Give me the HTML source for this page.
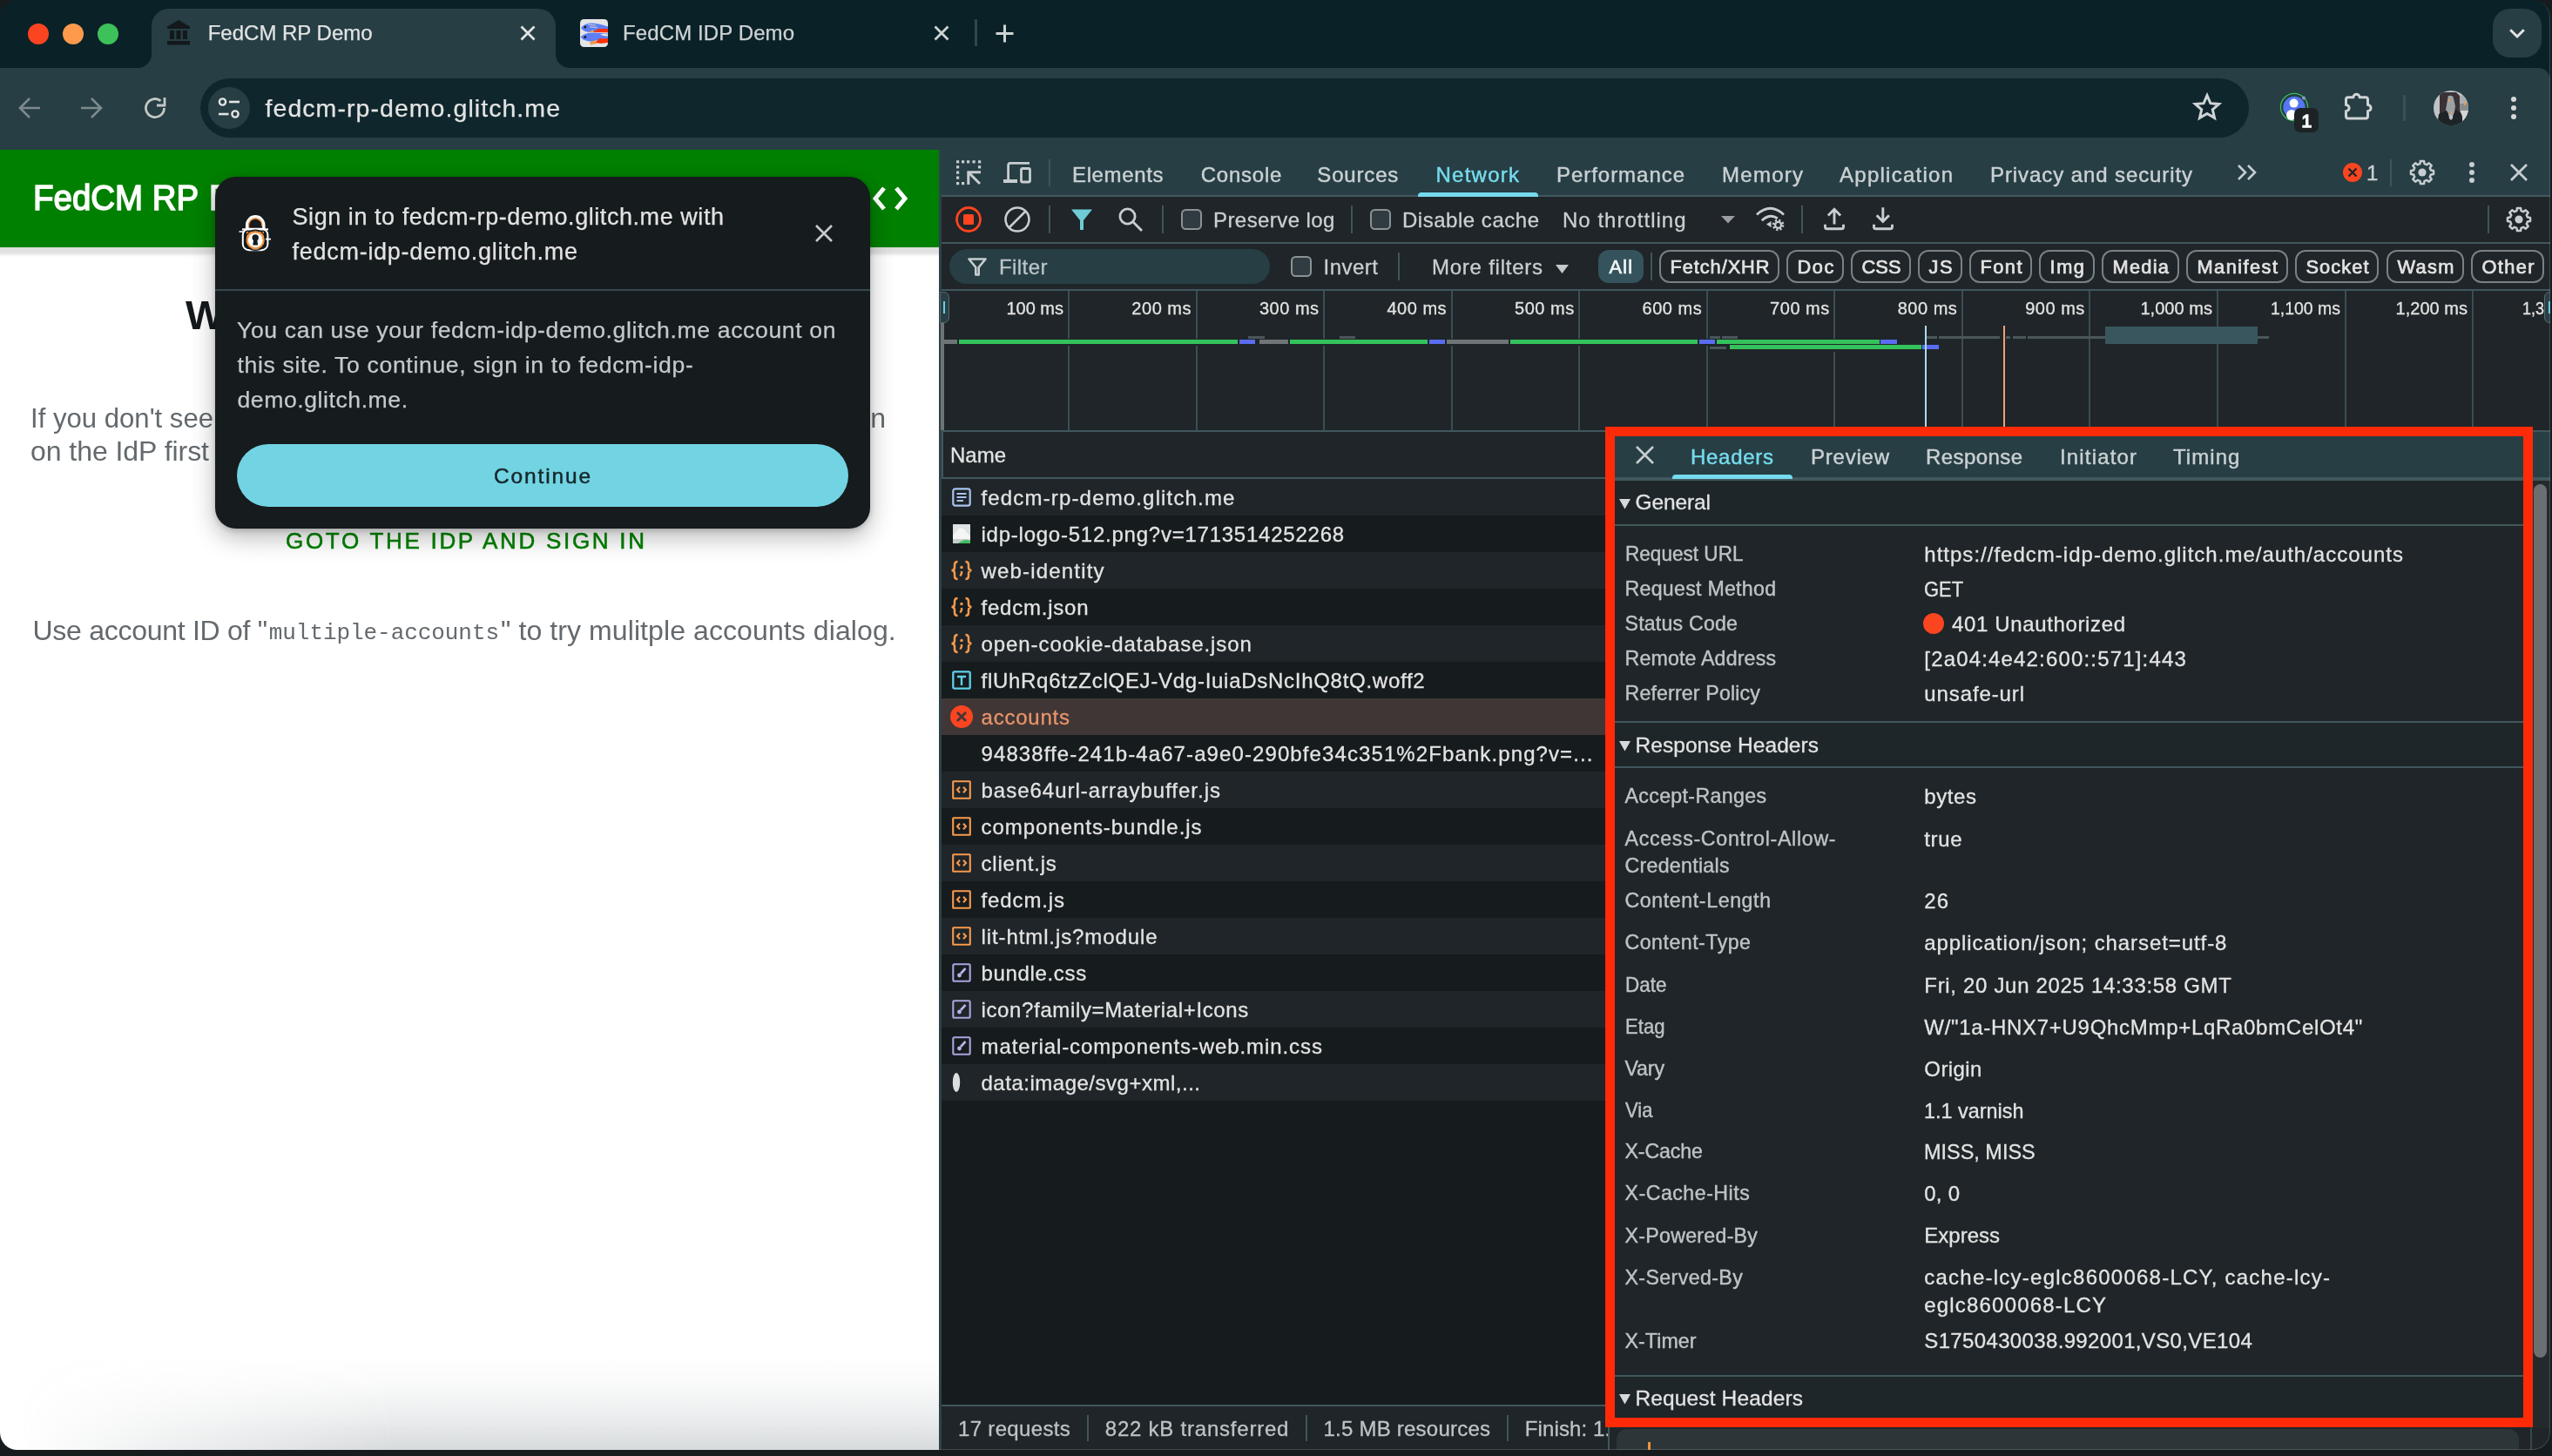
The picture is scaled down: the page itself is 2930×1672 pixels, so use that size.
<!DOCTYPE html>
<html lang="en"><head><meta charset="utf-8"><title>FedCM RP Demo</title>
<style>
html,body{margin:0;padding:0;background:#161b1e;}
body{width:2930px;height:1672px;overflow:hidden;position:relative;font-family:"Liberation Sans",sans-serif;}
#win{position:absolute;left:0;top:0;width:2928px;height:1665px;overflow:hidden;border-radius:20px;background:#0a2227;will-change:transform;}
#win div,#win svg,#win span,.g{position:absolute;}
.g{left:0;top:0;width:0;height:0;display:block;margin:0;padding:0;}
#win svg{overflow:visible;}
.t{white-space:pre;line-height:normal;}
#edge{left:1078px;top:0;width:1850px;height:1665px;border-radius:0 20px 20px 0;box-sizing:border-box;border:1.5px solid rgba(150,170,176,0.28);border-left:none;border-top:none;pointer-events:none;}
</style></head><body><div id="win">
<header id="browser-chrome" class="g">
<div style="left:0px;top:78px;width:2928px;height:94px;background:#263e44;border-radius:0 14px 0 0;"></div>
<div style="left:174px;top:10px;width:464px;height:70px;background:#263e44;border-radius:20px 20px 0 0;"></div>
<div style="left:158px;top:62px;width:16px;height:16px;background:radial-gradient(circle at 0 0, rgba(0,0,0,0) 15.5px, #263e44 16.5px);"></div>
<div style="left:638px;top:62px;width:16px;height:16px;background:radial-gradient(circle at 100% 0, rgba(0,0,0,0) 15.5px, #263e44 16.5px);"></div>
<div style="left:32px;top:27px;width:24px;height:24px;background:#fb4520;border-radius:50%;"></div>
<div style="left:72px;top:27px;width:24px;height:24px;background:#ff9a4d;border-radius:50%;"></div>
<div style="left:112px;top:27px;width:24px;height:24px;background:#3dc25a;border-radius:50%;"></div>
<svg style="left:191px;top:22px;" width="28" height="30" viewBox="0 0 28 30"><path d="M14 1 L27 8.5 V11 H1 V8.5 Z M4 13 h5 v10 h-5z M11.5 13 h5 v10 h-5z M19 13 h5 v10 h-5z M1 25 h26 v4.5 h-26z" fill="#12181b"/></svg>
<span class="t" style="left:238.7px;top:24px;font:400 24px 'Liberation Sans', sans-serif;color:#e3e3e3;-webkit-text-stroke:0.25px #e3e3e3;">FedCM RP Demo</span>
<svg style="left:596px;top:28px;" width="20" height="20" viewBox="0 0 20 20"><path d="M2.5 2.5 L17.5 17.5 M17.5 2.5 L2.5 17.5" stroke="#e3e3e3" stroke-width="2.8" fill="none"/></svg>
<svg style="left:666px;top:22px;" width="32" height="32" viewBox="0 0 32 32"><rect width="32" height="32" rx="4.5" fill="#e4e5e6"/><path d="M1 10 Q6 4 14 4.5 Q22 5 32 8.5 V15 H12 Q4 15 1 10z" fill="#5e7ef5"/><path d="M0.5 20.5 Q6 15 16 15.5 L32 16.5 V23 L20 24 Q14 27 8 25 Q3 24 0.5 20.5z" fill="#5e7ef5"/><path d="M15 15 L21 11 H32 V15.2z" fill="#fb3208"/><path d="M17 27 L22 22.3 H32 V27 L24 28z" fill="#fb3208"/><path d="M11 27 L17 24 L19 28 L12 29.5z" fill="#f59a45"/><path d="M10 15 L15 12 L16 15z" fill="#f59a45"/><path d="M23 17.5 Q28 16 32 17.6 V19.5 Q27 20 23 17.5z" fill="#e4e5e6"/><circle cx="5.8" cy="9" r="1.5" fill="#1c1c1c"/><circle cx="5.8" cy="20.6" r="1.5" fill="#1c1c1c"/><path d="M9 6 L18 7 M11 9 L20 9.5" stroke="#aeb9d8" stroke-width="1.4"/></svg>
<span class="t" style="left:715px;top:24px;font:400 24px 'Liberation Sans', sans-serif;color:#cfd3d4;letter-spacing:0.11px;-webkit-text-stroke:0.25px #cfd3d4;">FedCM IDP Demo</span>
<svg style="left:1071px;top:28px;" width="20" height="20" viewBox="0 0 20 20"><path d="M2.5 2.5 L17.5 17.5 M17.5 2.5 L2.5 17.5" stroke="#cfd3d4" stroke-width="2.8" fill="none"/></svg>
<div style="left:1119px;top:22px;width:2.5px;height:31px;background:#2f474d;border-radius:1px;"></div>
<svg style="left:1143px;top:28px;" width="21" height="21" viewBox="0 0 21 21"><path d="M10.5 0.5 V20.5 M0.5 10.5 H20.5" stroke="#cfd3d4" stroke-width="3" fill="none"/></svg>
<div style="left:2862px;top:10px;width:56px;height:56px;background:#263e44;border-radius:20px;"></div>
<svg style="left:2880px;top:30px;" width="20" height="14" viewBox="0 0 20 14"><path d="M2.2 4.2 L10 12 L17.8 4.2" stroke="#e3e3e3" stroke-width="3" fill="none"/></svg>
<svg style="left:20px;top:110px;" width="28" height="28" viewBox="0 0 28 28"><path d="M26 14 H4 M14 3 L3 14 L14 25" stroke="#7d8a8d" stroke-width="2.6" fill="none"/></svg>
<svg style="left:91px;top:110px;" width="28" height="28" viewBox="0 0 28 28"><path d="M2 14 H24 M14 3 L25 14 L14 25" stroke="#7d8a8d" stroke-width="2.6" fill="none"/></svg>
<svg style="left:164px;top:110px;" width="28" height="28" viewBox="0 0 28 28"><path d="M24.5 14 A10.5 10.5 0 1 1 20.5 5.8" stroke="#c4c7c5" stroke-width="2.8" fill="none"/><path d="M25 2 V11 H16" stroke="#c4c7c5" stroke-width="2.8" fill="none"/></svg>
<div style="left:230px;top:90px;width:2352px;height:68px;background:#0f262c;border-radius:34px;"></div>
<div style="left:239px;top:100px;width:48px;height:48px;background:#263e44;border-radius:50%;"></div>
<svg style="left:250px;top:111px;" width="26" height="26" viewBox="0 0 26 26"><circle cx="5.5" cy="6" r="3.6" stroke="#e3e3e3" stroke-width="2.4" fill="none"/><path d="M13 6 H25" stroke="#e3e3e3" stroke-width="2.6"/><circle cx="20" cy="20" r="3.6" stroke="#e3e3e3" stroke-width="2.4" fill="none"/><path d="M1 20 H12.5" stroke="#e3e3e3" stroke-width="2.6"/></svg>
<span class="t" style="left:304.5px;top:108px;font:400 28.5px 'Liberation Sans', sans-serif;color:#e3e3e3;letter-spacing:1.06px;-webkit-text-stroke:0.25px #e3e3e3;">fedcm-rp-demo.glitch.me</span>
<svg style="left:2518px;top:107px;" width="32" height="31" viewBox="0 0 32 31"><path d="M16 2.6 L19.9 11.7 L29.6 12.5 L22.3 18.9 L24.5 28.4 L16 23.4 L7.5 28.4 L9.7 18.9 L2.4 12.5 L12.1 11.7 Z" stroke="#cfd4d5" stroke-width="3" fill="none" stroke-linejoin="miter"/></svg>
<svg style="left:2617px;top:106px;" width="34" height="34" viewBox="0 0 34 34"><circle cx="17" cy="17" r="15.6" fill="#263e44" stroke="#3dc25a" stroke-width="1.2"/><circle cx="17" cy="17.3" r="12.6" fill="#5577f3"/><circle cx="16.6" cy="12.6" r="5" fill="#fff"/><circle cx="14" cy="26" r="6" fill="#fff"/><circle cx="28" cy="6.4" r="2" fill="#8d96c8"/></svg>
<div style="left:2634px;top:124px;width:28px;height:28px;background:#1d2225;border-radius:7px;"></div>
<span class="t" style="left:2642.5px;top:127px;font:400 21px 'Liberation Sans', sans-serif;color:#fff;-webkit-text-stroke:1.5px #fff;">1</span>
<svg style="left:2690px;top:104px;" width="36" height="36" viewBox="0 0 36 36"><path d="M6 7.8 H11.9 A3.6 3.6 0 0 1 19.1 7.8 H26 Q28.5 7.8 28.5 10.3 V16.4 A3.6 3.6 0 0 1 28.5 23.6 V29.5 Q28.5 32 26 32 H6 Q3.5 32 3.5 29.5 V23.6 A3.6 3.6 0 0 0 3.5 16.4 V10.3 Q3.5 7.8 6 7.8 Z" stroke="#cfd4d5" stroke-width="3" fill="none" stroke-linejoin="round"/></svg>
<div style="left:2759px;top:109px;width:2.5px;height:30px;background:#3a5158;border-radius:1px;"></div>
<svg style="left:2794px;top:104px;" width="40" height="40" viewBox="0 0 40 40"><defs><clipPath id="avc"><circle cx="20" cy="20" r="20"/></clipPath></defs><g clip-path="url(#avc)"><rect width="40" height="40" fill="#bfc3c6"/><rect x="22" y="6" width="18" height="9" fill="#a9adb0"/><rect x="24" y="15" width="16" height="8" fill="#878c8f"/><rect x="26" y="23" width="14" height="12" fill="#d2d5d6"/><path d="M7 40 V4 L10 2 H26 L30 6 V22 L33 30 V40z" fill="#3a3235"/><path d="M13 8 Q20 3 25 9 L26 20 Q24 28 20 31 Q15 28 13 20z" fill="#9ba2a5"/><path d="M12 6 L17 5 L14 22 L16 30 L12 28z M22 5 L27 8 L27 24 L23 30 L25 18z" fill="#3a3235"/><path d="M4 40 L6 27 L15 23 L20 32 L26 22 L32 27 L34 40z" fill="#1d2326"/><path d="M17 26 Q20 30 22.5 26 L22 32 L20 34 L18 32z" fill="#b9c0c2"/><rect x="17" y="10" width="1.6" height="3" fill="#f59a45"/><rect x="19.5" y="24" width="1.6" height="3" fill="#f59a45"/><rect x="35" y="13" width="1.6" height="4" fill="#f59a45"/></g></svg>
<div style="left:2883px;top:111px;width:6px;height:6px;background:#d5d8d9;border-radius:50%;"></div>
<div style="left:2883px;top:121px;width:6px;height:6px;background:#d5d8d9;border-radius:50%;"></div>
<div style="left:2883px;top:131px;width:6px;height:6px;background:#d5d8d9;border-radius:50%;"></div>
</header>
<main id="page" class="g">
<div style="left:0px;top:172px;width:1078px;height:1493px;background:#ffffff;"></div>
<div style="left:0px;top:1555px;width:1078px;height:110px;background:linear-gradient(to bottom, rgba(110,122,128,0) 0%, rgba(110,122,128,0.035) 30%, rgba(110,122,128,0.12) 62%, rgba(110,122,128,0.27) 100%);-webkit-mask-image:linear-gradient(to right, rgba(0,0,0,0) 2%, rgba(0,0,0,0.45) 18%, #000 42%);mask-image:linear-gradient(to right, rgba(0,0,0,0) 2%, rgba(0,0,0,0.45) 18%, #000 42%);"></div>
<div style="left:0px;top:284px;width:1078px;height:12px;background:linear-gradient(to bottom, rgba(0,0,0,0.13), rgba(0,0,0,0.11) 55%, rgba(0,0,0,0.02) 80%, rgba(0,0,0,0));"></div>
<div style="left:0px;top:172px;width:1078px;height:112px;background:#008000;"></div>
<span class="t" style="left:38.4px;top:205px;font:400 40px 'Liberation Sans', sans-serif;color:#fff;-webkit-text-stroke:1.5px #fff;transform:scaleX(0.9615);transform-origin:0 0;">FedCM RP</span>
<span class="t" style="left:240px;top:205px;font:400 40px 'Liberation Sans', sans-serif;color:#fff;-webkit-text-stroke:1.5px #fff;transform:scaleX(0.9559);transform-origin:0 0;">Demo</span>
<svg style="left:1000px;top:212px;" width="44" height="32" viewBox="0 0 44 32"><path d="M15 4 L5 16 L15 28 M29 4 L39 16 L29 28" stroke="#fff" stroke-width="5" fill="none"/></svg>
<span class="t" style="left:213px;top:334px;font:700 47px 'Liberation Sans', sans-serif;color:#14191c;letter-spacing:0.84px;">Welcome!</span>
<span class="t" style="left:35px;top:461.5px;font:400 32px 'Liberation Sans', sans-serif;color:#63696d;transform:scaleX(0.9721);transform-origin:0 0;">If you don't see</span>
<span class="t" style="left:254px;top:461.5px;font:400 32px 'Liberation Sans', sans-serif;color:#63696d;letter-spacing:3.26px;">the FedCM dialog, you might need to sign in</span>
<span class="t" style="left:35px;top:499.75px;font:400 32px 'Liberation Sans', sans-serif;color:#63696d;letter-spacing:-0.05px;">on the IdP first</span>
<span class="t" style="left:328px;top:605.5px;font:400 26px 'Liberation Sans', sans-serif;color:#008000;letter-spacing:2.71px;-webkit-text-stroke:0.55px #008000;">GOTO THE IDP AND SIGN IN</span>
<span class="t" style="left:37.5px;top:706px;font:400 32px 'Liberation Sans', sans-serif;color:#63696d;letter-spacing:-0.28px;">Use account ID of "</span>
<span class="t" style="left:308.75px;top:712px;font:400 26px 'Liberation Mono', monospace;color:#63696d;letter-spacing:-0.06px;">multiple-accounts</span>
<span class="t" style="left:575px;top:706px;font:400 32px 'Liberation Sans', sans-serif;color:#63696d;letter-spacing:0.09px;">" to try mulitple accounts dialog.</span>
</main>
<section id="fedcm-dialog" class="g">
<div style="left:247px;top:203px;width:752px;height:404px;background:#161b1e;border-radius:24px;box-shadow:0 10px 28px rgba(0,0,0,0.28),0 2px 6px rgba(0,0,0,0.18);"></div>
<svg style="left:272px;top:246px;" width="44" height="44" viewBox="0 0 44 44"><path d="M11.6 17 V12.4 A9.6 9.6 0 0 1 30.8 12.4 V17" stroke="#fff" stroke-width="3.4" fill="none"/><path d="M13.6 17 V12.6 A7.6 7.6 0 0 1 28.8 12.6 V14" stroke="#f0923e" stroke-width="1.3" fill="none"/><rect x="6.8" y="16.8" width="28.6" height="24.4" rx="7" fill="#161b1e" stroke="#fff" stroke-width="2"/><path d="M6 17.4 H36" stroke="#fff" stroke-width="2.2"/><path d="M11 20 H31 V26 H11z" fill="#f0923e"/><circle cx="21.2" cy="29.8" r="10.6" fill="#f0923e"/><circle cx="21.2" cy="29.8" r="11.6" fill="none" stroke="#161b1e" stroke-width="1.2"/><circle cx="21.2" cy="29.8" r="8.4" fill="#fff"/><circle cx="21.2" cy="27" r="3.7" fill="#161b1e"/><path d="M19.4 28 L18.2 35.4 H24.2 L23 28z" fill="#161b1e"/><path d="M2.5 20 H8 M33 28.6 H39" stroke="#fff" stroke-width="1.6"/></svg>
<span class="t" style="left:335.5px;top:234px;font:400 27px 'Liberation Sans', sans-serif;color:#e3e3e3;letter-spacing:0.56px;-webkit-text-stroke:0.25px #e3e3e3;">Sign in to fedcm-rp-demo.glitch.me with</span>
<span class="t" style="left:335.5px;top:274px;font:400 27px 'Liberation Sans', sans-serif;color:#e3e3e3;letter-spacing:0.73px;-webkit-text-stroke:0.25px #e3e3e3;">fedcm-idp-demo.glitch.me</span>
<svg style="left:935px;top:257px;" width="22" height="22" viewBox="0 0 22 22"><path d="M2 2 L20 20 M20 2 L2 20" stroke="#c7cbcc" stroke-width="2.6" fill="none"/></svg>
<div style="left:247px;top:332px;width:752px;height:2px;background:#34484e;"></div>
<span class="t" style="left:272px;top:364px;font:400 26.6px 'Liberation Sans', sans-serif;color:#c4c9cb;letter-spacing:0.63px;-webkit-text-stroke:0.25px #c4c9cb;">You can use your fedcm-idp-demo.glitch.me account on</span>
<span class="t" style="left:272.5px;top:404px;font:400 26.6px 'Liberation Sans', sans-serif;color:#c4c9cb;letter-spacing:0.65px;-webkit-text-stroke:0.25px #c4c9cb;">this site. To continue, sign in to fedcm-idp-</span>
<span class="t" style="left:272.5px;top:444px;font:400 26.6px 'Liberation Sans', sans-serif;color:#c4c9cb;letter-spacing:0.56px;-webkit-text-stroke:0.25px #c4c9cb;">demo.glitch.me.</span>
<div style="left:272px;top:510px;width:702px;height:72px;background:#72d4e3;border-radius:36px;"></div>
<span class="t" style="left:567px;top:533px;font:400 24.5px 'Liberation Sans', sans-serif;color:#16282d;letter-spacing:1.85px;-webkit-text-stroke:0.5px #16282d;">Continue</span>
</section>
<aside id="devtools" class="g">
<nav id="devtools-toolbars" class="g">
<div style="left:1078px;top:172px;width:1850px;height:1493px;background:#1f2528;"></div>
<div style="left:1078px;top:172px;width:3px;height:1493px;background:#2c4248;"></div>
<div style="left:1081px;top:172px;width:1847px;height:52.2px;background:#263e44;"></div>
<div style="left:1081px;top:224.1px;width:1847px;height:2px;background:#40575d;"></div>
<svg style="left:1097px;top:183px;" width="30" height="30" viewBox="0 0 30 30"><rect x="1" y="1.2" width="3.2" height="3.2" fill="#c7cdd0"/><rect x="7" y="1.2" width="3.2" height="3.2" fill="#c7cdd0"/><rect x="13" y="1.2" width="3.2" height="3.2" fill="#c7cdd0"/><rect x="19.5" y="1.2" width="3.2" height="3.2" fill="#c7cdd0"/><rect x="26" y="1.2" width="3.2" height="3.2" fill="#c7cdd0"/><rect x="26" y="7.2" width="3.2" height="3.2" fill="#c7cdd0"/><rect x="1" y="7.2" width="3.2" height="3.2" fill="#c7cdd0"/><rect x="1" y="13.5" width="3.2" height="3.2" fill="#c7cdd0"/><rect x="1" y="19.5" width="3.2" height="3.2" fill="#c7cdd0"/><rect x="1" y="26" width="3.2" height="3.2" fill="#c7cdd0"/><rect x="7" y="26" width="3.2" height="3.2" fill="#c7cdd0"/><path d="M14.8 29 V14.8 H29 M15.5 15.5 L28 28" stroke="#c7cdd0" stroke-width="3" fill="none"/></svg>
<svg style="left:1151px;top:184px;" width="34" height="28" viewBox="0 0 34 28"><path d="M31 3.4 H9 Q6.6 3.4 6.6 5.8 V22" stroke="#c7cdd0" stroke-width="2.8" fill="none"/><rect x="1" y="22" width="16" height="4" fill="#c7cdd0"/><rect x="21.5" y="9.5" width="10" height="15.5" rx="1.5" stroke="#c7cdd0" stroke-width="2.8" fill="none"/></svg>
<div style="left:1204px;top:182.5px;width:2px;height:31px;background:#3f555b;"></div>
<span class="t" style="left:1231px;top:186.75px;font:400 24px 'Liberation Sans', sans-serif;color:#cad0d2;letter-spacing:0.64px;-webkit-text-stroke:0.45px #cad0d2;">Elements</span>
<span class="t" style="left:1378.75px;top:186.75px;font:400 24px 'Liberation Sans', sans-serif;color:#cad0d2;letter-spacing:0.75px;-webkit-text-stroke:0.45px #cad0d2;">Console</span>
<span class="t" style="left:1512.3px;top:186.75px;font:400 24px 'Liberation Sans', sans-serif;color:#cad0d2;letter-spacing:0.83px;-webkit-text-stroke:0.45px #cad0d2;">Sources</span>
<span class="t" style="left:1648.5px;top:186.75px;font:400 24px 'Liberation Sans', sans-serif;color:#76dbee;letter-spacing:1.24px;-webkit-text-stroke:0.45px #76dbee;">Network</span>
<span class="t" style="left:1787px;top:186.75px;font:400 24px 'Liberation Sans', sans-serif;color:#cad0d2;letter-spacing:0.96px;-webkit-text-stroke:0.45px #cad0d2;">Performance</span>
<span class="t" style="left:1977px;top:186.75px;font:400 24px 'Liberation Sans', sans-serif;color:#cad0d2;letter-spacing:1.27px;-webkit-text-stroke:0.45px #cad0d2;">Memory</span>
<span class="t" style="left:2112px;top:186.75px;font:400 24px 'Liberation Sans', sans-serif;color:#cad0d2;letter-spacing:1.26px;-webkit-text-stroke:0.45px #cad0d2;">Application</span>
<span class="t" style="left:2285px;top:186.75px;font:400 24px 'Liberation Sans', sans-serif;color:#cad0d2;letter-spacing:0.91px;-webkit-text-stroke:0.45px #cad0d2;">Privacy and security</span>
<div style="left:1628px;top:221.3px;width:137.5px;height:4.8px;background:#76dbee;border-radius:4px 4px 0 0;"></div>
<svg style="left:2567px;top:187px;" width="26" height="22" viewBox="0 0 26 22"><path d="M3 3 L11 11 L3 19 M14 3 L22 11 L14 19" stroke="#c7cdd0" stroke-width="2.6" fill="none"/></svg>
<div style="left:2690px;top:187px;width:22px;height:22px;background:#fb4520;border-radius:50%;"></div>
<svg style="left:2695px;top:192px;" width="12" height="12" viewBox="0 0 12 12"><path d="M1.5 1.5 L10.5 10.5 M10.5 1.5 L1.5 10.5" stroke="#1f2528" stroke-width="2.4"/></svg>
<span class="t" style="left:2717px;top:184.5px;font:400 24px 'Liberation Sans', sans-serif;color:#cad0d2;letter-spacing:-2.36px;-webkit-text-stroke:0.3px #cad0d2;">1</span>
<div style="left:2744px;top:182.5px;width:2px;height:31.5px;background:#3f555b;"></div>
<svg style="left:2766px;top:183px;" width="30" height="30" viewBox="0 0 30 30"><path d="M12.94 1.96 L17.06 1.96 L17.54 5.12 L20.19 6.22 L22.76 4.32 L25.68 7.24 L23.78 9.81 L24.88 12.46 L28.04 12.94 L28.04 17.06 L24.88 17.54 L23.78 20.19 L25.68 22.76 L22.76 25.68 L20.19 23.78 L17.54 24.88 L17.06 28.04 L12.94 28.04 L12.46 24.88 L9.81 23.78 L7.24 25.68 L4.32 22.76 L6.22 20.19 L5.12 17.54 L1.96 17.06 L1.96 12.94 L5.12 12.46 L6.22 9.81 L4.32 7.24 L7.24 4.32 L9.81 6.22 L12.46 5.12 Z" stroke="#c7cdd0" stroke-width="2.5" fill="none" stroke-linejoin="round"/><circle cx="15" cy="15" r="4.6" fill="#c7cdd0"/></svg>
<div style="left:2835px;top:185.8px;width:6.4px;height:6.4px;background:#c7cdd0;border-radius:50%;"></div>
<div style="left:2835px;top:194.8px;width:6.4px;height:6.4px;background:#c7cdd0;border-radius:50%;"></div>
<div style="left:2835px;top:203.8px;width:6.4px;height:6.4px;background:#c7cdd0;border-radius:50%;"></div>
<svg style="left:2881px;top:187px;" width="22" height="22" viewBox="0 0 22 22"><path d="M2 2 L20 20 M20 2 L2 20" stroke="#c7cdd0" stroke-width="2.8" fill="none"/></svg>
<div style="left:1081px;top:278.1px;width:1847px;height:2px;background:#40575d;"></div>
<svg style="left:1096px;top:236px;" width="32" height="32" viewBox="0 0 32 32"><circle cx="16" cy="16" r="13.5" stroke="#fb4520" stroke-width="2.8" fill="none"/><rect x="10" y="10" width="12" height="12" rx="1.5" fill="#fb4520"/></svg>
<svg style="left:1152px;top:236px;" width="32" height="32" viewBox="0 0 32 32"><circle cx="16" cy="16" r="13.5" stroke="#c7cdd0" stroke-width="2.6" fill="none"/><path d="M6.5 25.5 L25.5 6.5" stroke="#c7cdd0" stroke-width="2.6"/></svg>
<div style="left:1204px;top:236px;width:2px;height:31.5px;background:#3f555b;"></div>
<svg style="left:1229px;top:239px;" width="26" height="27" viewBox="0 0 26 27"><path d="M1 1.5 H25 L15 14 V25 H11 V14 Z" fill="#6fcbd6"/></svg>
<svg style="left:1283px;top:237px;" width="30" height="30" viewBox="0 0 30 30"><circle cx="11.5" cy="11.5" r="8.6" stroke="#c7cdd0" stroke-width="2.8" fill="none"/><path d="M18 18 L28 28" stroke="#c7cdd0" stroke-width="2.8"/></svg>
<div style="left:1334px;top:236px;width:2px;height:31.5px;background:#3f555b;"></div>
<div style="left:1356px;top:240px;width:24px;height:24px;background:#303c41;border:2px solid #8c9294;border-radius:5.5px;box-sizing:border-box;"></div>
<span class="t" style="left:1393px;top:238.8px;font:400 24px 'Liberation Sans', sans-serif;color:#cad0d2;letter-spacing:0.43px;-webkit-text-stroke:0.3px #cad0d2;">Preserve log</span>
<div style="left:1551px;top:236px;width:2px;height:31.5px;background:#3f555b;"></div>
<div style="left:1573px;top:240px;width:24px;height:24px;background:#303c41;border:2px solid #8c9294;border-radius:5.5px;box-sizing:border-box;"></div>
<span class="t" style="left:1610px;top:238.8px;font:400 24px 'Liberation Sans', sans-serif;color:#cad0d2;letter-spacing:0.52px;-webkit-text-stroke:0.3px #cad0d2;">Disable cache</span>
<span class="t" style="left:1794px;top:238.8px;font:400 24px 'Liberation Sans', sans-serif;color:#cad0d2;letter-spacing:1.01px;-webkit-text-stroke:0.3px #cad0d2;">No throttling</span>
<svg style="left:1976px;top:247.7px;" width="16" height="8.4" viewBox="0 0 16 8.4"><path d="M0 0 H16 L8 8.4Z" fill="#9b9ca6"/></svg>
<svg style="left:2014px;top:236px;" width="38" height="32" viewBox="0 0 38 32"><path d="M3 10.5 Q18.5 -3.8 34 10.5" stroke="#c7cdd0" stroke-width="2.9" fill="none"/><path d="M8.8 17.2 Q18 8.6 26.8 14.8" stroke="#c7cdd0" stroke-width="2.9" fill="none"/><path d="M14 21.6 L19.6 18 V25.2z" fill="#c7cdd0"/><circle cx="27.6" cy="22.4" r="5.5" stroke="#c7cdd0" stroke-width="2.6" fill="none" stroke-dasharray="2.16 2.16"/><circle cx="27.6" cy="22.4" r="3.5" stroke="#c7cdd0" stroke-width="2.3" fill="none"/></svg>
<div style="left:2068px;top:236px;width:2px;height:31.5px;background:#3f555b;"></div>
<svg style="left:2092px;top:236px;" width="28" height="30" viewBox="0 0 28 30"><path d="M14 21.6 V4.6 M6.9 11.4 L14 4.2 L21.1 11.4" stroke="#c7cdd0" stroke-width="2.9" fill="none"/><path d="M3.5 21.8 V24.4 Q3.5 26.8 6 26.8 H22 Q24.5 26.8 24.5 24.4 V21.8" stroke="#c7cdd0" stroke-width="2.9" fill="none"/></svg>
<svg style="left:2148px;top:236px;" width="28" height="30" viewBox="0 0 28 30"><path d="M13.8 2.2 V18 M6.7 11.2 L13.8 18.4 L20.9 11.2" stroke="#c7cdd0" stroke-width="2.9" fill="none"/><path d="M3.5 21.8 V24.4 Q3.5 26.8 6 26.8 H22 Q24.5 26.8 24.5 24.4 V21.8" stroke="#c7cdd0" stroke-width="2.9" fill="none"/></svg>
<div style="left:2856px;top:236px;width:2px;height:31.5px;background:#3f555b;"></div>
<svg style="left:2877px;top:237px;" width="30" height="30" viewBox="0 0 30 30"><path d="M12.94 1.96 L17.06 1.96 L17.54 5.12 L20.19 6.22 L22.76 4.32 L25.68 7.24 L23.78 9.81 L24.88 12.46 L28.04 12.94 L28.04 17.06 L24.88 17.54 L23.78 20.19 L25.68 22.76 L22.76 25.68 L20.19 23.78 L17.54 24.88 L17.06 28.04 L12.94 28.04 L12.46 24.88 L9.81 23.78 L7.24 25.68 L4.32 22.76 L6.22 20.19 L5.12 17.54 L1.96 17.06 L1.96 12.94 L5.12 12.46 L6.22 9.81 L4.32 7.24 L7.24 4.32 L9.81 6.22 L12.46 5.12 Z" stroke="#c7cdd0" stroke-width="2.5" fill="none" stroke-linejoin="round"/><circle cx="15" cy="15" r="4.6" fill="#c7cdd0"/></svg>
<div style="left:1081px;top:331.8px;width:1847px;height:2.2px;background:#40575d;"></div>
<div style="left:1090px;top:286px;width:368px;height:40px;background:#263e44;border-radius:20px;"></div>
<svg style="left:1111px;top:296px;" width="22" height="21" viewBox="0 0 22 21"><path d="M1.5 1.5 H20.5 L12.7 11 V19.5 H9.3 V11 Z" stroke="#c7cdd0" stroke-width="2.6" fill="none" stroke-linejoin="round"/></svg>
<span class="t" style="left:1147px;top:293px;font:400 24px 'Liberation Sans', sans-serif;color:#bcc5c8;letter-spacing:0.43px;-webkit-text-stroke:0.3px #bcc5c8;">Filter</span>
<div style="left:1482px;top:294px;width:24px;height:24px;background:#303c41;border:2px solid #8c9294;border-radius:5.5px;box-sizing:border-box;"></div>
<span class="t" style="left:1519.5px;top:293px;font:400 24px 'Liberation Sans', sans-serif;color:#cad0d2;letter-spacing:0.49px;-webkit-text-stroke:0.3px #cad0d2;">Invert</span>
<div style="left:1605px;top:290px;width:2px;height:32px;background:#3f555b;"></div>
<span class="t" style="left:1644px;top:293px;font:400 24px 'Liberation Sans', sans-serif;color:#cad0d2;letter-spacing:0.76px;-webkit-text-stroke:0.3px #cad0d2;">More filters</span>
<svg style="left:1785.5px;top:304px;" width="15" height="10.5" viewBox="0 0 15 10.5"><path d="M0 0 H15 L7.5 10Z" fill="#c3cacc"/></svg>
<div style="left:1835px;top:287px;width:52px;height:38.3px;background:#35535c;border-radius:12px;"></div>
<span class="t" style="left:1847.5px;top:293.7px;font:400 21.8px 'Liberation Sans', sans-serif;color:#f1f3f3;letter-spacing:1.13px;-webkit-text-stroke:0.7px #f1f3f3;">All</span>
<div style="left:1895px;top:290px;width:2px;height:32px;background:#3f555b;"></div>
<div style="left:1905px;top:287.2px;width:138px;height:38px;border:2px solid #798184;border-radius:12px;box-sizing:border-box;"></div>
<span class="t" style="left:1917.5px;top:293.7px;font:400 21.8px 'Liberation Sans', sans-serif;color:#e3e3e3;letter-spacing:0.93px;-webkit-text-stroke:0.7px #e3e3e3;">Fetch/XHR</span>
<div style="left:2051px;top:287.2px;width:66px;height:38px;border:2px solid #798184;border-radius:12px;box-sizing:border-box;"></div>
<span class="t" style="left:2063.5px;top:293.7px;font:400 21.8px 'Liberation Sans', sans-serif;color:#e3e3e3;letter-spacing:1.62px;-webkit-text-stroke:0.7px #e3e3e3;">Doc</span>
<div style="left:2125px;top:287.2px;width:69px;height:38px;border:2px solid #798184;border-radius:12px;box-sizing:border-box;"></div>
<span class="t" style="left:2137.5px;top:293.7px;font:400 21.8px 'Liberation Sans', sans-serif;color:#e3e3e3;letter-spacing:0.09px;-webkit-text-stroke:0.7px #e3e3e3;">CSS</span>
<div style="left:2202px;top:287.2px;width:51px;height:38px;border:2px solid #798184;border-radius:12px;box-sizing:border-box;"></div>
<span class="t" style="left:2214.5px;top:293.7px;font:400 21.8px 'Liberation Sans', sans-serif;color:#e3e3e3;letter-spacing:1.56px;-webkit-text-stroke:0.7px #e3e3e3;">JS</span>
<div style="left:2261px;top:287.2px;width:72px;height:38px;border:2px solid #798184;border-radius:12px;box-sizing:border-box;"></div>
<span class="t" style="left:2273.5px;top:293.7px;font:400 21.8px 'Liberation Sans', sans-serif;color:#e3e3e3;letter-spacing:1.46px;-webkit-text-stroke:0.7px #e3e3e3;">Font</span>
<div style="left:2341px;top:287.2px;width:63.5px;height:38px;border:2px solid #798184;border-radius:12px;box-sizing:border-box;"></div>
<span class="t" style="left:2353.5px;top:293.7px;font:400 21.8px 'Liberation Sans', sans-serif;color:#e3e3e3;letter-spacing:1.58px;-webkit-text-stroke:0.7px #e3e3e3;">Img</span>
<div style="left:2413px;top:287.2px;width:88.5px;height:38px;border:2px solid #798184;border-radius:12px;box-sizing:border-box;"></div>
<span class="t" style="left:2425.5px;top:293.7px;font:400 21.8px 'Liberation Sans', sans-serif;color:#e3e3e3;letter-spacing:1.28px;-webkit-text-stroke:0.7px #e3e3e3;">Media</span>
<div style="left:2510px;top:287.2px;width:116.5px;height:38px;border:2px solid #798184;border-radius:12px;box-sizing:border-box;"></div>
<span class="t" style="left:2522.5px;top:293.7px;font:400 21.8px 'Liberation Sans', sans-serif;color:#e3e3e3;letter-spacing:1.44px;-webkit-text-stroke:0.7px #e3e3e3;">Manifest</span>
<div style="left:2635px;top:287.2px;width:96px;height:38px;border:2px solid #798184;border-radius:12px;box-sizing:border-box;"></div>
<span class="t" style="left:2647.5px;top:293.7px;font:400 21.8px 'Liberation Sans', sans-serif;color:#e3e3e3;letter-spacing:1.07px;-webkit-text-stroke:0.7px #e3e3e3;">Socket</span>
<div style="left:2740px;top:287.2px;width:89px;height:38px;border:2px solid #798184;border-radius:12px;box-sizing:border-box;"></div>
<span class="t" style="left:2752.5px;top:293.7px;font:400 21.8px 'Liberation Sans', sans-serif;color:#e3e3e3;letter-spacing:1.35px;-webkit-text-stroke:0.7px #e3e3e3;">Wasm</span>
<div style="left:2837px;top:287.2px;width:84px;height:38px;border:2px solid #798184;border-radius:12px;box-sizing:border-box;"></div>
<span class="t" style="left:2849.5px;top:293.7px;font:400 21.8px 'Liberation Sans', sans-serif;color:#e3e3e3;letter-spacing:1.37px;-webkit-text-stroke:0.7px #e3e3e3;">Other</span>
</nav>
<section id="network-overview" class="g">
<div style="left:1226px;top:334px;width:2px;height:160px;background:#3a4e54;"></div>
<div style="left:1372.55px;top:334px;width:2px;height:160px;background:#3a4e54;"></div>
<div style="left:1519.1px;top:334px;width:2px;height:160px;background:#3a4e54;"></div>
<div style="left:1665.65px;top:334px;width:2px;height:160px;background:#3a4e54;"></div>
<div style="left:1812.2px;top:334px;width:2px;height:160px;background:#3a4e54;"></div>
<div style="left:1958.75px;top:334px;width:2px;height:160px;background:#3a4e54;"></div>
<div style="left:2105.3px;top:334px;width:2px;height:160px;background:#3a4e54;"></div>
<div style="left:2251.85px;top:334px;width:2px;height:160px;background:#3a4e54;"></div>
<div style="left:2398.4px;top:334px;width:2px;height:160px;background:#3a4e54;"></div>
<div style="left:2544.95px;top:334px;width:2px;height:160px;background:#3a4e54;"></div>
<div style="left:2691.5px;top:334px;width:2px;height:160px;background:#3a4e54;"></div>
<div style="left:2838.05px;top:334px;width:2px;height:160px;background:#3a4e54;"></div>
<div style="left:1084px;top:388.8px;width:1095px;height:8.2px;background:#1f2528;"></div>
<div style="left:1962px;top:395.5px;width:265px;height:8px;background:#1f2528;"></div>
<span class="t" style="left:1155.5px;top:343.1px;font:400 20px 'Liberation Sans', sans-serif;color:#e3e3e3;letter-spacing:-0.02px;-webkit-text-stroke:0.3px #e3e3e3;">100 ms</span>
<span class="t" style="left:1299.35px;top:343.1px;font:400 20px 'Liberation Sans', sans-serif;color:#e3e3e3;letter-spacing:0.52px;-webkit-text-stroke:0.3px #e3e3e3;">200 ms</span>
<span class="t" style="left:1445.9px;top:343.1px;font:400 20px 'Liberation Sans', sans-serif;color:#e3e3e3;letter-spacing:0.52px;-webkit-text-stroke:0.3px #e3e3e3;">300 ms</span>
<span class="t" style="left:1592.45px;top:343.1px;font:400 20px 'Liberation Sans', sans-serif;color:#e3e3e3;letter-spacing:0.52px;-webkit-text-stroke:0.3px #e3e3e3;">400 ms</span>
<span class="t" style="left:1739px;top:343.1px;font:400 20px 'Liberation Sans', sans-serif;color:#e3e3e3;letter-spacing:0.52px;-webkit-text-stroke:0.3px #e3e3e3;">500 ms</span>
<span class="t" style="left:1885.55px;top:343.1px;font:400 20px 'Liberation Sans', sans-serif;color:#e3e3e3;letter-spacing:0.52px;-webkit-text-stroke:0.3px #e3e3e3;">600 ms</span>
<span class="t" style="left:2032.1px;top:343.1px;font:400 20px 'Liberation Sans', sans-serif;color:#e3e3e3;letter-spacing:0.52px;-webkit-text-stroke:0.3px #e3e3e3;">700 ms</span>
<span class="t" style="left:2178.65px;top:343.1px;font:400 20px 'Liberation Sans', sans-serif;color:#e3e3e3;letter-spacing:0.52px;-webkit-text-stroke:0.3px #e3e3e3;">800 ms</span>
<span class="t" style="left:2325.2px;top:343.1px;font:400 20px 'Liberation Sans', sans-serif;color:#e3e3e3;letter-spacing:0.52px;-webkit-text-stroke:0.3px #e3e3e3;">900 ms</span>
<span class="t" style="left:2457.45px;top:343.1px;font:400 20px 'Liberation Sans', sans-serif;color:#e3e3e3;letter-spacing:0.03px;-webkit-text-stroke:0.3px #e3e3e3;">1,000 ms</span>
<span class="t" style="left:2606.5px;top:343.1px;font:400 20px 'Liberation Sans', sans-serif;color:#e3e3e3;-webkit-text-stroke:0.3px #e3e3e3;transform:scaleX(0.9725);transform-origin:0 0;">1,100 ms</span>
<span class="t" style="left:2750.55px;top:343.1px;font:400 20px 'Liberation Sans', sans-serif;color:#e3e3e3;letter-spacing:0.03px;-webkit-text-stroke:0.3px #e3e3e3;">1,200 ms</span>
<span class="t" style="left:2896px;top:343.1px;font:400 20px 'Liberation Sans', sans-serif;color:#e3e3e3;-webkit-text-stroke:0.3px #e3e3e3;transform:scaleX(0.8989);transform-origin:0 0;">1,3</span>
<div style="left:1080px;top:371px;width:4px;height:123px;background:#6d7376;"></div>
<div style="left:1079px;top:335px;width:11px;height:36px;background:#2a3f45;border:1.5px solid #56686d;border-radius:0 6px 6px 0;box-sizing:border-box;"></div>
<div style="left:1082.5px;top:346px;width:2.2px;height:14px;background:#62cfe6;"></div>
<div style="left:2921px;top:335px;width:8px;height:36px;background:#2a3f45;border:1.5px solid #56686d;border-radius:6px 0 0 6px;box-sizing:border-box;"></div>
<div style="left:2926px;top:346px;width:2.2px;height:14px;background:#62cfe6;"></div>
<div style="left:1084px;top:390px;width:15px;height:5px;background:#6f7577;"></div>
<div style="left:1101px;top:390px;width:320px;height:5px;background:#34c25c;"></div>
<div style="left:1423px;top:390px;width:18px;height:5px;background:#5a6cf0;"></div>
<div style="left:1446px;top:390px;width:33px;height:5px;background:#6f7577;"></div>
<div style="left:1481px;top:390px;width:158px;height:5px;background:#34c25c;"></div>
<div style="left:1640.5px;top:390px;width:18.5px;height:5px;background:#5a6cf0;"></div>
<div style="left:1661px;top:390px;width:71px;height:5px;background:#6f7577;"></div>
<div style="left:1734px;top:390px;width:215px;height:5px;background:#34c25c;"></div>
<div style="left:1950.5px;top:390px;width:18.5px;height:5px;background:#5a6cf0;"></div>
<div style="left:1970.5px;top:390px;width:187px;height:5px;background:#34c25c;"></div>
<div style="left:2159px;top:390px;width:18.5px;height:5px;background:#5a6cf0;"></div>
<div style="left:1986px;top:396.4px;width:219.5px;height:5px;background:#34c25c;"></div>
<div style="left:2207px;top:396.4px;width:18.5px;height:5px;background:#5a6cf0;"></div>
<div style="left:1433px;top:385.5px;width:19px;height:3px;background:#4a575b;"></div>
<div style="left:1538px;top:385.5px;width:18px;height:3px;background:#4a575b;"></div>
<div style="left:1962.5px;top:385.5px;width:12.5px;height:3px;background:#4a575b;"></div>
<div style="left:1977px;top:385.5px;width:18px;height:3px;background:#4a575b;"></div>
<div style="left:1962.5px;top:397.5px;width:19px;height:3px;background:#4a575b;"></div>
<div style="left:2212px;top:385.5px;width:12px;height:3.2px;background:#4a575b;"></div>
<div style="left:2226px;top:385.5px;width:70px;height:3.2px;background:#4a575b;"></div>
<div style="left:2303px;top:385.5px;width:5px;height:3.2px;background:#4a575b;"></div>
<div style="left:2311px;top:385.5px;width:15px;height:3.2px;background:#4a575b;"></div>
<div style="left:2328px;top:385.5px;width:89px;height:3.2px;background:#4a575b;"></div>
<div style="left:2592px;top:385.5px;width:12.5px;height:3.2px;background:#4a575b;"></div>
<div style="left:2417px;top:375px;width:175px;height:20px;background:#39565e;"></div>
<div style="left:2210.3px;top:374px;width:1.8px;height:120px;background:#a9dcec;"></div>
<div style="left:2300.3px;top:374px;width:1.8px;height:120px;background:#f0a070;"></div>
<div style="left:1081px;top:494px;width:1847px;height:2px;background:#40575d;"></div>
</section>
<section id="request-list" class="g">
<div style="left:1081px;top:496px;width:765px;height:52px;background:#1f2528;"></div>
<div style="left:1081px;top:496px;width:1.6px;height:52px;background:#40575d;"></div>
<span class="t" style="left:1091px;top:509.25px;font:400 24px 'Liberation Sans', sans-serif;color:#e3e3e3;letter-spacing:-0.01px;-webkit-text-stroke:0.3px #e3e3e3;">Name</span>
<div style="left:1081px;top:547.5px;width:765px;height:2.5px;background:#40575d;"></div>
<svg style="left:1093px;top:560px;" width="22" height="22" viewBox="0 0 22 22"><rect x="1.3" y="1.3" width="19.4" height="19.4" rx="2.5" stroke="#a9c3ee" stroke-width="2.2" fill="none"/><path d="M5.5 7 H16.5 M5.5 11 H16.5 M5.5 15 H13" stroke="#a9c3ee" stroke-width="2.2"/></svg>
<span class="t" style="left:1126.5px;top:557.9px;font:400 24px 'Liberation Sans', sans-serif;color:#e3e3e3;letter-spacing:1.16px;-webkit-text-stroke:0.3px #e3e3e3;">fedcm-rp-demo.glitch.me</span>
<div style="left:1081px;top:592px;width:765px;height:42px;background:#161b1e;"></div>
<svg style="left:1093px;top:602px;" width="22" height="22" viewBox="0 0 22 22"><rect x="1" y="0" width="20" height="22" fill="#dfe2e3"/><path d="M1 22 V13 L8 5 Q11 3 14 6 L21 14 V22z" fill="#f4f5f5"/><path d="M1 17 H21 V22 H1z" fill="#c9cdce"/><path d="M7 22 Q14 16 21 19 V22z" fill="#3fbf5f"/></svg>
<span class="t" style="left:1126.5px;top:599.9px;font:400 24px 'Liberation Sans', sans-serif;color:#e3e3e3;letter-spacing:0.76px;-webkit-text-stroke:0.3px #e3e3e3;">idp-logo-512.png?v=1713514252268</span>
<svg style="left:1091px;top:643px;" width="26" height="24" viewBox="0 0 26 24"><path d="M8.5 2 Q5 2 5 5.5 V8.5 Q5 12 1.5 12 Q5 12 5 15.5 V18.5 Q5 22 8.5 22 M17.5 2 Q21 2 21 5.5 V8.5 Q21 12 24.5 12 Q21 12 21 15.5 V18.5 Q21 22 17.5 22" stroke="#f89a4c" stroke-width="2.5" fill="none"/><circle cx="13" cy="8.5" r="1.7" fill="#f89a4c"/><path d="M13 13 V15.5 L11.5 18.5" stroke="#f89a4c" stroke-width="2.4" fill="none"/></svg>
<span class="t" style="left:1126.5px;top:641.9px;font:400 24px 'Liberation Sans', sans-serif;color:#e3e3e3;letter-spacing:1.18px;-webkit-text-stroke:0.3px #e3e3e3;">web-identity</span>
<div style="left:1081px;top:676px;width:765px;height:42px;background:#161b1e;"></div>
<svg style="left:1091px;top:685px;" width="26" height="24" viewBox="0 0 26 24"><path d="M8.5 2 Q5 2 5 5.5 V8.5 Q5 12 1.5 12 Q5 12 5 15.5 V18.5 Q5 22 8.5 22 M17.5 2 Q21 2 21 5.5 V8.5 Q21 12 24.5 12 Q21 12 21 15.5 V18.5 Q21 22 17.5 22" stroke="#f89a4c" stroke-width="2.5" fill="none"/><circle cx="13" cy="8.5" r="1.7" fill="#f89a4c"/><path d="M13 13 V15.5 L11.5 18.5" stroke="#f89a4c" stroke-width="2.4" fill="none"/></svg>
<span class="t" style="left:1126.5px;top:683.9px;font:400 24px 'Liberation Sans', sans-serif;color:#e3e3e3;letter-spacing:0.77px;-webkit-text-stroke:0.3px #e3e3e3;">fedcm.json</span>
<svg style="left:1091px;top:727px;" width="26" height="24" viewBox="0 0 26 24"><path d="M8.5 2 Q5 2 5 5.5 V8.5 Q5 12 1.5 12 Q5 12 5 15.5 V18.5 Q5 22 8.5 22 M17.5 2 Q21 2 21 5.5 V8.5 Q21 12 24.5 12 Q21 12 21 15.5 V18.5 Q21 22 17.5 22" stroke="#f89a4c" stroke-width="2.5" fill="none"/><circle cx="13" cy="8.5" r="1.7" fill="#f89a4c"/><path d="M13 13 V15.5 L11.5 18.5" stroke="#f89a4c" stroke-width="2.4" fill="none"/></svg>
<span class="t" style="left:1126.5px;top:725.9px;font:400 24px 'Liberation Sans', sans-serif;color:#e3e3e3;letter-spacing:0.92px;-webkit-text-stroke:0.3px #e3e3e3;">open-cookie-database.json</span>
<div style="left:1081px;top:760px;width:765px;height:42px;background:#161b1e;"></div>
<svg style="left:1093px;top:770px;" width="22" height="22" viewBox="0 0 22 22"><rect x="1.3" y="1.3" width="19.4" height="19.4" rx="1.5" stroke="#5fd0e6" stroke-width="2.3" fill="none"/><path d="M6 7 H16 M11 7 V17" stroke="#5fd0e6" stroke-width="2.4"/></svg>
<span class="t" style="left:1126.5px;top:767.9px;font:400 24px 'Liberation Sans', sans-serif;color:#e3e3e3;letter-spacing:0.72px;-webkit-text-stroke:0.3px #e3e3e3;">flUhRq6tzZclQEJ-Vdg-IuiaDsNcIhQ8tQ.woff2</span>
<div style="left:1081px;top:802px;width:765px;height:42px;background:#403636;"></div>
<svg style="left:1091px;top:810px;" width="26" height="26" viewBox="0 0 26 26"><circle cx="13" cy="13" r="13" fill="#fa4520"/><path d="M8 8 L18 18 M18 8 L8 18" stroke="#403636" stroke-width="2.8"/></svg>
<span class="t" style="left:1126.5px;top:809.9px;font:400 24px 'Liberation Sans', sans-serif;color:#e8956a;letter-spacing:0.78px;-webkit-text-stroke:0.3px #e8956a;">accounts</span>
<div style="left:1081px;top:844px;width:765px;height:42px;background:#161b1e;"></div>
<span class="t" style="left:1126.5px;top:851.9px;font:400 24px 'Liberation Sans', sans-serif;color:#e3e3e3;letter-spacing:1.1px;-webkit-text-stroke:0.3px #e3e3e3;">94838ffe-241b-4a67-a9e0-290bfe34c351%2Fbank.png?v=...</span>
<svg style="left:1093px;top:896px;" width="22" height="22" viewBox="0 0 22 22"><rect x="1.2" y="1.2" width="19.6" height="19.6" rx="0.6" stroke="#f89a4c" stroke-width="2.1" fill="none"/><path d="M9 7.8 L6 11 L9 14.2 M13 7.8 L16 11 L13 14.2" stroke="#f89a4c" stroke-width="2.1" fill="none"/></svg>
<span class="t" style="left:1126.5px;top:893.9px;font:400 24px 'Liberation Sans', sans-serif;color:#e3e3e3;letter-spacing:0.99px;-webkit-text-stroke:0.3px #e3e3e3;">base64url-arraybuffer.js</span>
<div style="left:1081px;top:928px;width:765px;height:42px;background:#161b1e;"></div>
<svg style="left:1093px;top:938px;" width="22" height="22" viewBox="0 0 22 22"><rect x="1.2" y="1.2" width="19.6" height="19.6" rx="0.6" stroke="#f89a4c" stroke-width="2.1" fill="none"/><path d="M9 7.8 L6 11 L9 14.2 M13 7.8 L16 11 L13 14.2" stroke="#f89a4c" stroke-width="2.1" fill="none"/></svg>
<span class="t" style="left:1126.5px;top:935.9px;font:400 24px 'Liberation Sans', sans-serif;color:#e3e3e3;letter-spacing:0.96px;-webkit-text-stroke:0.3px #e3e3e3;">components-bundle.js</span>
<svg style="left:1093px;top:980px;" width="22" height="22" viewBox="0 0 22 22"><rect x="1.2" y="1.2" width="19.6" height="19.6" rx="0.6" stroke="#f89a4c" stroke-width="2.1" fill="none"/><path d="M9 7.8 L6 11 L9 14.2 M13 7.8 L16 11 L13 14.2" stroke="#f89a4c" stroke-width="2.1" fill="none"/></svg>
<span class="t" style="left:1126.5px;top:977.9px;font:400 24px 'Liberation Sans', sans-serif;color:#e3e3e3;letter-spacing:0.78px;-webkit-text-stroke:0.3px #e3e3e3;">client.js</span>
<div style="left:1081px;top:1012px;width:765px;height:42px;background:#161b1e;"></div>
<svg style="left:1093px;top:1022px;" width="22" height="22" viewBox="0 0 22 22"><rect x="1.2" y="1.2" width="19.6" height="19.6" rx="0.6" stroke="#f89a4c" stroke-width="2.1" fill="none"/><path d="M9 7.8 L6 11 L9 14.2 M13 7.8 L16 11 L13 14.2" stroke="#f89a4c" stroke-width="2.1" fill="none"/></svg>
<span class="t" style="left:1126.5px;top:1019.9px;font:400 24px 'Liberation Sans', sans-serif;color:#e3e3e3;letter-spacing:0.88px;-webkit-text-stroke:0.3px #e3e3e3;">fedcm.js</span>
<svg style="left:1093px;top:1064px;" width="22" height="22" viewBox="0 0 22 22"><rect x="1.2" y="1.2" width="19.6" height="19.6" rx="0.6" stroke="#f89a4c" stroke-width="2.1" fill="none"/><path d="M9 7.8 L6 11 L9 14.2 M13 7.8 L16 11 L13 14.2" stroke="#f89a4c" stroke-width="2.1" fill="none"/></svg>
<span class="t" style="left:1126.5px;top:1061.9px;font:400 24px 'Liberation Sans', sans-serif;color:#e3e3e3;letter-spacing:0.9px;-webkit-text-stroke:0.3px #e3e3e3;">lit-html.js?module</span>
<div style="left:1081px;top:1096px;width:765px;height:42px;background:#161b1e;"></div>
<svg style="left:1093px;top:1106px;" width="22" height="22" viewBox="0 0 22 22"><rect x="1.3" y="1.3" width="19.4" height="19.4" rx="1.5" stroke="#a9a4dc" stroke-width="2.1" fill="none"/><path d="M15.5 6 L10 12" stroke="#b8b4e6" stroke-width="2.6"/><circle cx="8.5" cy="14" r="2.4" fill="#b8b4e6"/></svg>
<span class="t" style="left:1126.5px;top:1103.9px;font:400 24px 'Liberation Sans', sans-serif;color:#e3e3e3;letter-spacing:0.66px;-webkit-text-stroke:0.3px #e3e3e3;">bundle.css</span>
<svg style="left:1093px;top:1148px;" width="22" height="22" viewBox="0 0 22 22"><rect x="1.3" y="1.3" width="19.4" height="19.4" rx="1.5" stroke="#a9a4dc" stroke-width="2.1" fill="none"/><path d="M15.5 6 L10 12" stroke="#b8b4e6" stroke-width="2.6"/><circle cx="8.5" cy="14" r="2.4" fill="#b8b4e6"/></svg>
<span class="t" style="left:1126.5px;top:1145.9px;font:400 24px 'Liberation Sans', sans-serif;color:#e3e3e3;letter-spacing:0.64px;-webkit-text-stroke:0.3px #e3e3e3;">icon?family=Material+Icons</span>
<div style="left:1081px;top:1180px;width:765px;height:42px;background:#161b1e;"></div>
<svg style="left:1093px;top:1190px;" width="22" height="22" viewBox="0 0 22 22"><rect x="1.3" y="1.3" width="19.4" height="19.4" rx="1.5" stroke="#a9a4dc" stroke-width="2.1" fill="none"/><path d="M15.5 6 L10 12" stroke="#b8b4e6" stroke-width="2.6"/><circle cx="8.5" cy="14" r="2.4" fill="#b8b4e6"/></svg>
<span class="t" style="left:1126.5px;top:1187.9px;font:400 24px 'Liberation Sans', sans-serif;color:#e3e3e3;letter-spacing:0.91px;-webkit-text-stroke:0.3px #e3e3e3;">material-components-web.min.css</span>
<svg style="left:1093px;top:1231px;" width="12" height="24" viewBox="0 0 12 24"><ellipse cx="5" cy="12" rx="4.2" ry="11" fill="#dcdfe0"/></svg>
<span class="t" style="left:1126.5px;top:1229.9px;font:400 24px 'Liberation Sans', sans-serif;color:#e3e3e3;letter-spacing:0.51px;-webkit-text-stroke:0.3px #e3e3e3;">data:image/svg+xml,...</span>
<div style="left:1081px;top:1264px;width:765px;height:348.5px;background:#161b1e;"></div>
<div style="left:1081px;top:1612.5px;width:765px;height:2px;background:#40575d;"></div>
<span class="t" style="left:1100px;top:1626.75px;font:400 24px 'Liberation Sans', sans-serif;color:#bcc4c6;letter-spacing:0.33px;-webkit-text-stroke:0.3px #bcc4c6;">17 requests</span>
<div style="left:1247.75px;top:1624.5px;width:2px;height:30.5px;background:#3f555b;"></div>
<span class="t" style="left:1268.75px;top:1626.75px;font:400 24px 'Liberation Sans', sans-serif;color:#bcc4c6;letter-spacing:0.78px;-webkit-text-stroke:0.3px #bcc4c6;">822 kB transferred</span>
<div style="left:1499px;top:1624.5px;width:2px;height:30.5px;background:#3f555b;"></div>
<span class="t" style="left:1519.5px;top:1626.75px;font:400 24px 'Liberation Sans', sans-serif;color:#bcc4c6;letter-spacing:0.23px;-webkit-text-stroke:0.3px #bcc4c6;">1.5 MB resources</span>
<div style="left:1729.7px;top:1624.5px;width:2px;height:30.5px;background:#3f555b;"></div>
<span class="t" style="left:1750.75px;top:1626.75px;font:400 24px 'Liberation Sans', sans-serif;color:#bcc4c6;letter-spacing:0.12px;-webkit-text-stroke:0.3px #bcc4c6;">Finish: 1.14 s</span>
</section>
<section id="request-details" class="g">
<div style="left:1846px;top:496px;width:1082px;height:1170px;background:#1f2528;"></div>
<div style="left:1846px;top:496px;width:2px;height:1170px;background:#40575d;"></div>
<div style="left:1848px;top:496px;width:1080px;height:52px;background:#263e44;"></div>
<div style="left:1848px;top:548px;width:1080px;height:3.8px;background:#40575d;"></div>
<svg style="left:1876.5px;top:511px;" width="23" height="23" viewBox="0 0 23 23"><path d="M2 2 L21 21 M21 2 L2 21" stroke="#c7cdd0" stroke-width="2.6" fill="none"/></svg>
<span class="t" style="left:1941px;top:511px;font:400 24px 'Liberation Sans', sans-serif;color:#76dbee;letter-spacing:0.71px;-webkit-text-stroke:0.45px #76dbee;">Headers</span>
<span class="t" style="left:2079px;top:511px;font:400 24px 'Liberation Sans', sans-serif;color:#cad0d2;letter-spacing:0.77px;-webkit-text-stroke:0.45px #cad0d2;">Preview</span>
<span class="t" style="left:2211px;top:511px;font:400 24px 'Liberation Sans', sans-serif;color:#cad0d2;letter-spacing:0.42px;-webkit-text-stroke:0.45px #cad0d2;">Response</span>
<span class="t" style="left:2365px;top:511px;font:400 24px 'Liberation Sans', sans-serif;color:#cad0d2;letter-spacing:1.16px;-webkit-text-stroke:0.45px #cad0d2;">Initiator</span>
<span class="t" style="left:2495px;top:511px;font:400 24px 'Liberation Sans', sans-serif;color:#cad0d2;letter-spacing:1.07px;-webkit-text-stroke:0.45px #cad0d2;">Timing</span>
<div style="left:1920px;top:545.2px;width:138px;height:5px;background:#76dbee;border-radius:4px 4px 0 0;"></div>
<div style="left:1848px;top:602.1px;width:1059px;height:2px;background:#40575d;"></div>
<div style="left:1848px;top:828px;width:1059px;height:2px;background:#40575d;"></div>
<div style="left:1848px;top:880px;width:1059px;height:2px;background:#40575d;"></div>
<div style="left:1848px;top:1578.6px;width:1059px;height:2px;background:#40575d;"></div>
<div style="left:1848px;top:551.8px;width:1059px;height:50.3px;background:#1e2629;"></div>
<div style="left:1848px;top:830px;width:1059px;height:50px;background:#1e2629;"></div>
<div style="left:1848px;top:1580.6px;width:1059px;height:59.4px;background:#1e2629;"></div>
<svg style="left:1859px;top:572.5px;" width="13" height="12" viewBox="0 0 13 12"><path d="M0 0 H13 L6.5 11.5Z" fill="#d5d9da"/></svg>
<span class="t" style="left:1877.5px;top:563px;font:400 24.5px 'Liberation Sans', sans-serif;color:#e3e3e3;letter-spacing:-0.11px;-webkit-text-stroke:0.3px #e3e3e3;">General</span>
<span class="t" style="left:1865.5px;top:623px;font:400 23.2px 'Liberation Sans', sans-serif;color:#bcc4c6;-webkit-text-stroke:0.4px #bcc4c6;transform:scaleX(0.9734);transform-origin:0 0;">Request URL</span>
<span class="t" style="left:2209.3px;top:622.75px;font:400 24px 'Liberation Sans', sans-serif;color:#e3e3e3;letter-spacing:1.01px;-webkit-text-stroke:0.3px #e3e3e3;">https://fedcm-idp-demo.glitch.me/auth/accounts</span>
<span class="t" style="left:1865.5px;top:663px;font:400 23.2px 'Liberation Sans', sans-serif;color:#bcc4c6;letter-spacing:0.26px;-webkit-text-stroke:0.4px #bcc4c6;">Request Method</span>
<span class="t" style="left:2209.3px;top:662.75px;font:400 24px 'Liberation Sans', sans-serif;color:#e3e3e3;-webkit-text-stroke:0.3px #e3e3e3;transform:scaleX(0.9160);transform-origin:0 0;">GET</span>
<span class="t" style="left:1865.5px;top:703px;font:400 23.2px 'Liberation Sans', sans-serif;color:#bcc4c6;letter-spacing:0.19px;-webkit-text-stroke:0.4px #bcc4c6;">Status Code</span>
<span class="t" style="left:1865.5px;top:743px;font:400 23.2px 'Liberation Sans', sans-serif;color:#bcc4c6;letter-spacing:0.16px;-webkit-text-stroke:0.4px #bcc4c6;">Remote Address</span>
<span class="t" style="left:2209.3px;top:742.75px;font:400 24px 'Liberation Sans', sans-serif;color:#e3e3e3;letter-spacing:1.17px;-webkit-text-stroke:0.3px #e3e3e3;">[2a04:4e42:600::571]:443</span>
<span class="t" style="left:1865.5px;top:783px;font:400 23.2px 'Liberation Sans', sans-serif;color:#bcc4c6;letter-spacing:0.15px;-webkit-text-stroke:0.4px #bcc4c6;">Referrer Policy</span>
<span class="t" style="left:2209.3px;top:782.75px;font:400 24px 'Liberation Sans', sans-serif;color:#e3e3e3;letter-spacing:0.89px;-webkit-text-stroke:0.3px #e3e3e3;">unsafe-url</span>
<div style="left:2208px;top:704px;width:24px;height:24px;background:#fa4520;border-radius:50%;"></div>
<span class="t" style="left:2241px;top:702.75px;font:400 24px 'Liberation Sans', sans-serif;color:#e3e3e3;letter-spacing:0.64px;-webkit-text-stroke:0.3px #e3e3e3;">401 Unauthorized</span>
<svg style="left:1859px;top:851.25px;" width="13" height="12" viewBox="0 0 13 12"><path d="M0 0 H13 L6.5 11.5Z" fill="#d5d9da"/></svg>
<span class="t" style="left:1877.5px;top:841.75px;font:400 24.5px 'Liberation Sans', sans-serif;color:#e3e3e3;letter-spacing:0.05px;-webkit-text-stroke:0.3px #e3e3e3;">Response Headers</span>
<span class="t" style="left:1865.5px;top:901px;font:400 23.2px 'Liberation Sans', sans-serif;color:#bcc4c6;letter-spacing:0.33px;-webkit-text-stroke:0.4px #bcc4c6;">Accept-Ranges</span>
<span class="t" style="left:2209.3px;top:900.75px;font:400 24px 'Liberation Sans', sans-serif;color:#e3e3e3;letter-spacing:0.58px;-webkit-text-stroke:0.3px #e3e3e3;">bytes</span>
<span class="t" style="left:1865.5px;top:949.75px;font:400 23.2px 'Liberation Sans', sans-serif;color:#bcc4c6;letter-spacing:0.7px;-webkit-text-stroke:0.4px #bcc4c6;">Access-Control-Allow-</span>
<span class="t" style="left:2209.3px;top:949.5px;font:400 24px 'Liberation Sans', sans-serif;color:#e3e3e3;letter-spacing:0.61px;-webkit-text-stroke:0.3px #e3e3e3;">true</span>
<span class="t" style="left:1865.5px;top:981px;font:400 23.2px 'Liberation Sans', sans-serif;color:#bcc4c6;letter-spacing:0.27px;-webkit-text-stroke:0.4px #bcc4c6;">Credentials</span>
<span class="t" style="left:1865.5px;top:1021px;font:400 23.2px 'Liberation Sans', sans-serif;color:#bcc4c6;letter-spacing:0.59px;-webkit-text-stroke:0.4px #bcc4c6;">Content-Length</span>
<span class="t" style="left:2209.3px;top:1020.75px;font:400 24px 'Liberation Sans', sans-serif;color:#e3e3e3;letter-spacing:1px;-webkit-text-stroke:0.3px #e3e3e3;">26</span>
<span class="t" style="left:1865.5px;top:1069.25px;font:400 23.2px 'Liberation Sans', sans-serif;color:#bcc4c6;letter-spacing:0.48px;-webkit-text-stroke:0.4px #bcc4c6;">Content-Type</span>
<span class="t" style="left:2209.3px;top:1069px;font:400 24px 'Liberation Sans', sans-serif;color:#e3e3e3;letter-spacing:0.92px;-webkit-text-stroke:0.3px #e3e3e3;">application/json; charset=utf-8</span>
<span class="t" style="left:1865.5px;top:1117.75px;font:400 23.2px 'Liberation Sans', sans-serif;color:#bcc4c6;-webkit-text-stroke:0.4px #bcc4c6;transform:scaleX(0.9697);transform-origin:0 0;">Date</span>
<span class="t" style="left:2209.3px;top:1117.5px;font:400 24px 'Liberation Sans', sans-serif;color:#e3e3e3;letter-spacing:0.68px;-webkit-text-stroke:0.3px #e3e3e3;">Fri, 20 Jun 2025 14:33:58 GMT</span>
<span class="t" style="left:1865.5px;top:1166px;font:400 23.2px 'Liberation Sans', sans-serif;color:#bcc4c6;-webkit-text-stroke:0.4px #bcc4c6;transform:scaleX(0.9538);transform-origin:0 0;">Etag</span>
<span class="t" style="left:2209.3px;top:1165.75px;font:400 24px 'Liberation Sans', sans-serif;color:#e3e3e3;letter-spacing:0.7px;-webkit-text-stroke:0.3px #e3e3e3;">W/"1a-HNX7+U9QhcMmp+LqRa0bmCelOt4"</span>
<span class="t" style="left:1865.5px;top:1214px;font:400 23.2px 'Liberation Sans', sans-serif;color:#bcc4c6;letter-spacing:-0.16px;-webkit-text-stroke:0.4px #bcc4c6;">Vary</span>
<span class="t" style="left:2209.3px;top:1213.75px;font:400 24px 'Liberation Sans', sans-serif;color:#e3e3e3;letter-spacing:0.43px;-webkit-text-stroke:0.3px #e3e3e3;">Origin</span>
<span class="t" style="left:1865.5px;top:1261.75px;font:400 23.2px 'Liberation Sans', sans-serif;color:#bcc4c6;-webkit-text-stroke:0.4px #bcc4c6;transform:scaleX(0.9514);transform-origin:0 0;">Via</span>
<span class="t" style="left:2209.3px;top:1261.5px;font:400 24px 'Liberation Sans', sans-serif;color:#e3e3e3;-webkit-text-stroke:0.3px #e3e3e3;transform:scaleX(0.9748);transform-origin:0 0;">1.1 varnish</span>
<span class="t" style="left:1865.5px;top:1309.25px;font:400 23.2px 'Liberation Sans', sans-serif;color:#bcc4c6;letter-spacing:-0.12px;-webkit-text-stroke:0.4px #bcc4c6;">X-Cache</span>
<span class="t" style="left:2209.3px;top:1309px;font:400 24px 'Liberation Sans', sans-serif;color:#e3e3e3;-webkit-text-stroke:0.3px #e3e3e3;transform:scaleX(0.9771);transform-origin:0 0;">MISS, MISS</span>
<span class="t" style="left:1865.5px;top:1357.25px;font:400 23.2px 'Liberation Sans', sans-serif;color:#bcc4c6;letter-spacing:0.49px;-webkit-text-stroke:0.4px #bcc4c6;">X-Cache-Hits</span>
<span class="t" style="left:2209.3px;top:1357px;font:400 24px 'Liberation Sans', sans-serif;color:#e3e3e3;letter-spacing:0.22px;-webkit-text-stroke:0.3px #e3e3e3;">0, 0</span>
<span class="t" style="left:1865.5px;top:1405.5px;font:400 23.2px 'Liberation Sans', sans-serif;color:#bcc4c6;letter-spacing:0.27px;-webkit-text-stroke:0.4px #bcc4c6;">X-Powered-By</span>
<span class="t" style="left:2209.3px;top:1405.25px;font:400 24px 'Liberation Sans', sans-serif;color:#e3e3e3;-webkit-text-stroke:0.3px #e3e3e3;">Express</span>
<span class="t" style="left:1865.5px;top:1453.5px;font:400 23.2px 'Liberation Sans', sans-serif;color:#bcc4c6;letter-spacing:0.38px;-webkit-text-stroke:0.4px #bcc4c6;">X-Served-By</span>
<span class="t" style="left:2209.3px;top:1453.25px;font:400 24px 'Liberation Sans', sans-serif;color:#e3e3e3;letter-spacing:1.24px;-webkit-text-stroke:0.3px #e3e3e3;">cache-lcy-eglc8600068-LCY, cache-lcy-</span>
<span class="t" style="left:2209.3px;top:1485px;font:400 24px 'Liberation Sans', sans-serif;color:#e3e3e3;letter-spacing:1.18px;-webkit-text-stroke:0.3px #e3e3e3;">eglc8600068-LCY</span>
<span class="t" style="left:1865.5px;top:1526.5px;font:400 23.2px 'Liberation Sans', sans-serif;color:#bcc4c6;letter-spacing:0.07px;-webkit-text-stroke:0.4px #bcc4c6;">X-Timer</span>
<span class="t" style="left:2209.3px;top:1526.25px;font:400 24px 'Liberation Sans', sans-serif;color:#e3e3e3;letter-spacing:0.35px;-webkit-text-stroke:0.3px #e3e3e3;">S1750430038.992001,VS0,VE104</span>
<svg style="left:1859px;top:1601px;" width="13" height="12" viewBox="0 0 13 12"><path d="M0 0 H13 L6.5 11.5Z" fill="#d5d9da"/></svg>
<span class="t" style="left:1877.5px;top:1591.5px;font:400 24.5px 'Liberation Sans', sans-serif;color:#e3e3e3;letter-spacing:0.13px;-webkit-text-stroke:0.3px #e3e3e3;">Request Headers</span>
<div style="left:2907px;top:552px;width:21px;height:1088px;background:#24292c;"></div>
<div style="left:2909px;top:556px;width:15px;height:1003px;background:#6c6f71;border-radius:8px;"></div>
<div style="left:1848px;top:1640px;width:1080px;height:26px;background:#1f2528;"></div>
<div style="left:1856px;top:1641px;width:1036px;height:30px;background:#2c3639;border-radius:12px 12px 0 0;"></div>
<div style="left:1891.5px;top:1655.5px;width:3px;height:10px;background:#f0923e;"></div>
<div style="left:2905px;top:1640px;width:1.6px;height:26px;background:#39484c;"></div>
<div style="left:1842.5px;top:489.5px;width:1065px;height:1149.5px;border:11.5px solid #ff2a08;box-sizing:border-box;"></div>
</section>
</aside>

<div id="edge"></div>
</div></body></html>
